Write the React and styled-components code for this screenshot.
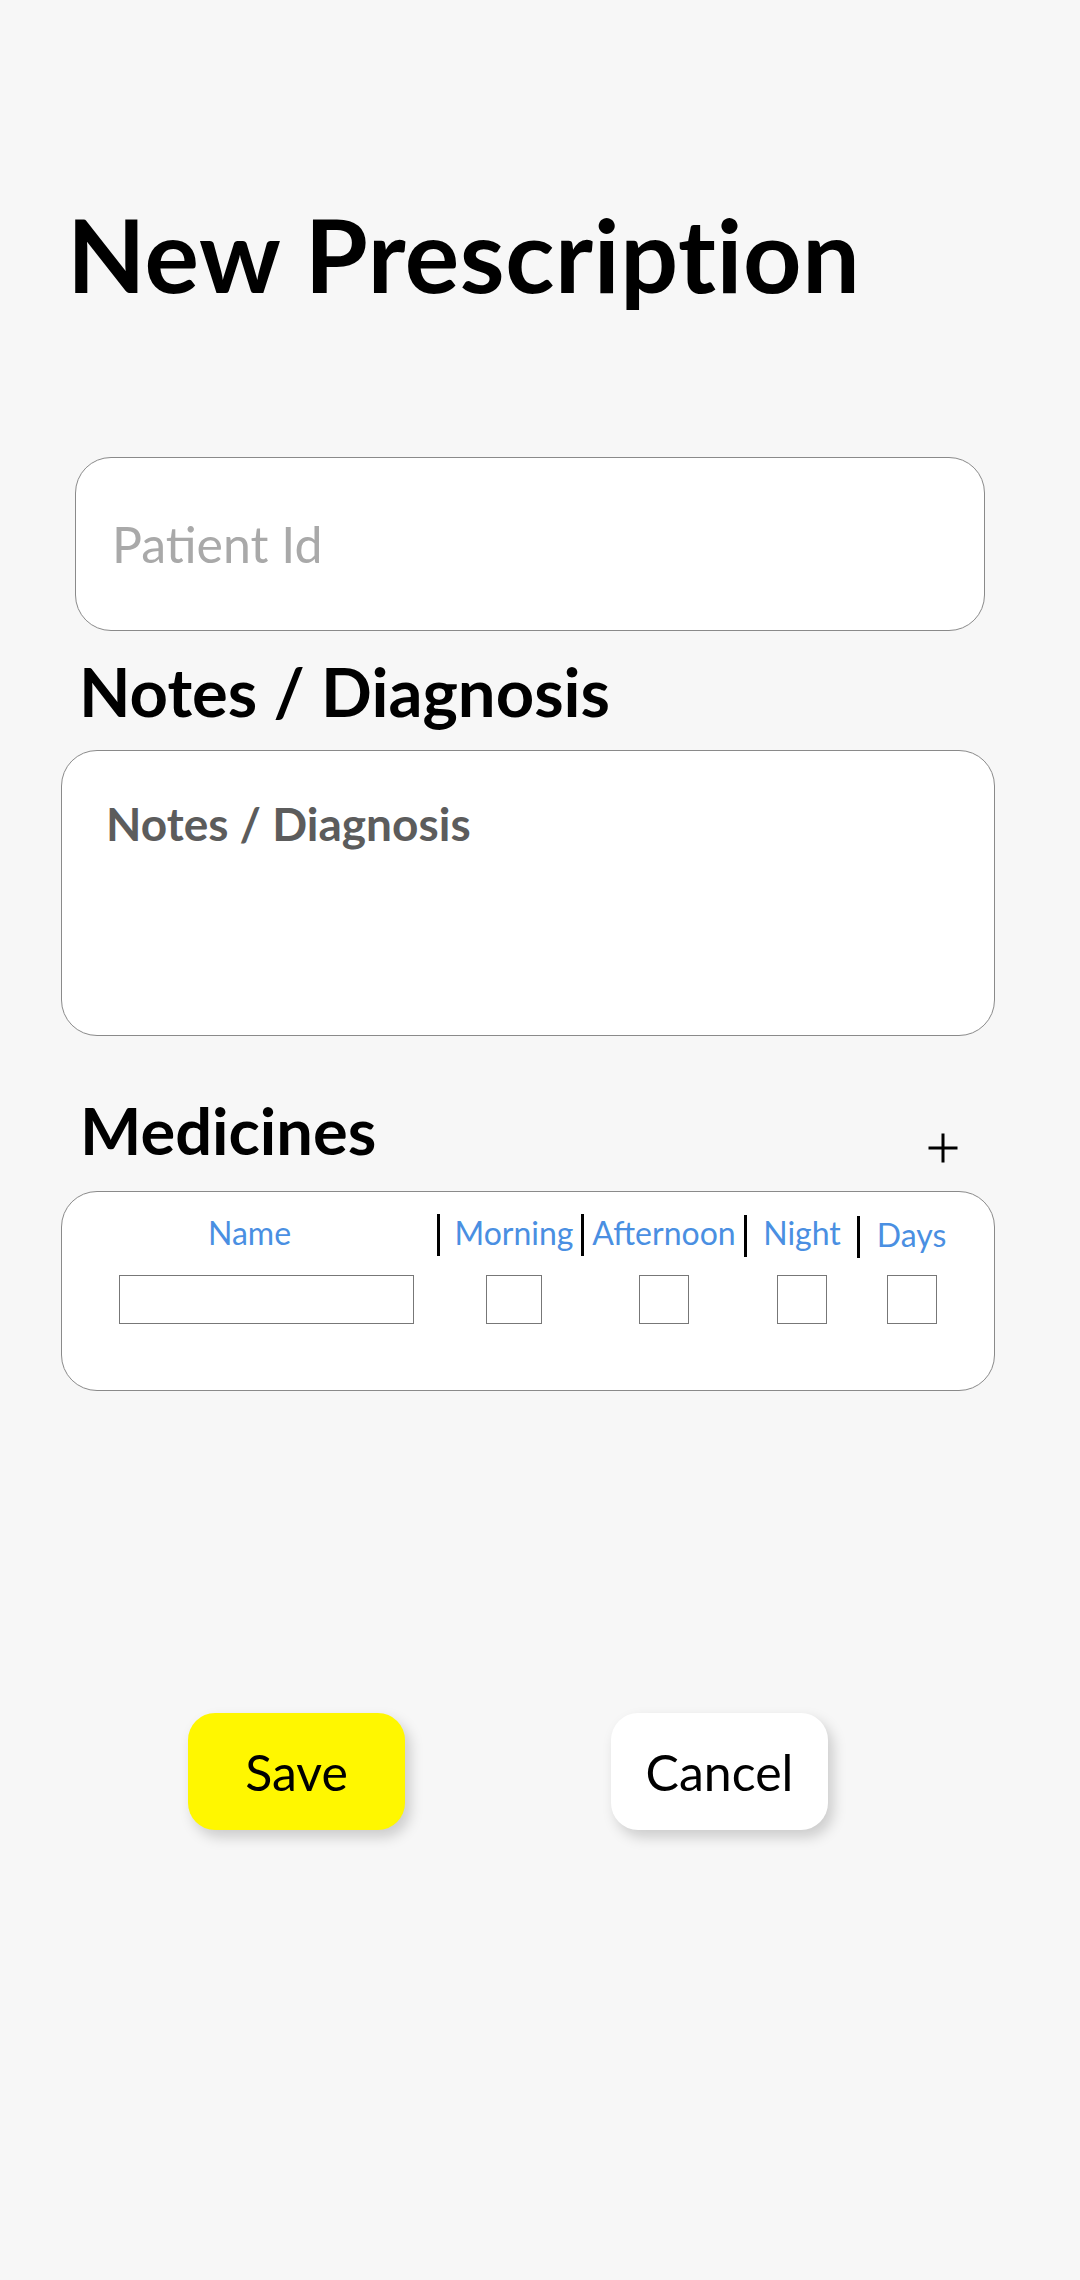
import React from "react";
import styled, { createGlobalStyle } from "styled-components";

const Global = createGlobalStyle`
  html, body { margin: 0; padding: 0; background: #f7f7f7; }
  body { font-family: Lato, "Noto Sans", sans-serif; }
  * { box-sizing: border-box; }
`;

const Page = styled.div`
  width: 1080px;
  min-height: 2280px;
  background: #f7f7f7;
  padding-top: 204px;
  display: flex;
  flex-direction: column;
`;

const Title = styled.h1`
  margin: 0;
  padding-left: 67px;
  font-family: Lato, "Noto Sans", sans-serif;
  font-weight: 700;
  font-size: 102px;
  line-height: 100px;
  letter-spacing: 0.6px;
  color: #000;
`;

const TextField = styled.input`
  margin: 153px 0 0 75px;
  width: 910px;
  height: 174px;
  border: 1px solid #8a8a8a;
  border-radius: 36px;
  background: #fff;
  padding: 0 0 0 36px;
  font-family: Lato, "Noto Sans", sans-serif;
  font-size: 50px;
  color: #222;
  outline: none;
  &::placeholder { color: #a9a9a9; }
`;

const SectionHeading = styled.h2`
  margin: ${(p) => p.$top}px 0 0 0;
  padding-left: ${(p) => p.$left}px;
  font-family: Lato, "Noto Sans", sans-serif;
  font-weight: 700;
  font-size: ${(p) => p.$size}px;
  line-height: 66px;
  color: #000;
`;

const NotesArea = styled.textarea`
  margin: 26px 0 0 61px;
  width: 934px;
  height: 286px;
  border: 1px solid #8a8a8a;
  border-radius: 36px;
  background: #fff;
  padding: 47px 40px 0 44px;
  font-family: Lato, "Noto Sans", sans-serif;
  font-weight: 700;
  font-size: 46px;
  line-height: 52px;
  resize: none;
  outline: none;
  color: #333;
  &::placeholder { color: #5c5c5c; }
`;

const MedicinesHeader = styled.div`
  margin-top: 61px;
  display: flex;
  justify-content: space-between;
  align-items: flex-start;
  padding-right: 121px;
  height: 66px;
`;

const AddButton = styled.button`
  align-self: flex-end;
  margin-bottom: -1px;
  width: 32px;
  height: 32px;
  padding: 0;
  border: none;
  background: transparent;
  display: flex;
  cursor: pointer;
`;

const MedicineBox = styled.div`
  margin: 28px 0 0 61px;
  width: 934px;
  height: 200px;
  border: 1px solid #8a8a8a;
  border-radius: 36px;
  background: #fff;
  padding: 22px 31px 0 0;
  display: grid;
  grid-template-columns: 375px 3px 141px 3px 160px 3px 110px 3px 103px;
  grid-template-rows: 42px 49px;
  row-gap: 19px;
`;

const ColLabel = styled.span`
  grid-row: 1;
  grid-column: ${(p) => p.$col};
  justify-self: center;
  margin-left: ${(p) => p.$nudge || 0}px;
  margin-top: ${(p) => p.$drop || 0}px;
  font-family: Lato, "Noto Sans", sans-serif;
  font-size: 32px;
  line-height: 38px;
  color: #4a8fe2;
  white-space: nowrap;
`;

const Divider = styled.span`
  grid-row: 1;
  grid-column: ${(p) => p.$col};
  width: 3px;
  height: 42px;
  background: #000;
  margin-top: ${(p) => p.$drop || 0}px;
`;

const CellInput = styled.input`
  grid-row: 2;
  grid-column: ${(p) => p.$col};
  justify-self: ${(p) => (p.$start ? "start" : "center")};
  margin-left: ${(p) => p.$nudge || 0}px;
  width: ${(p) => p.$w}px;
  height: 49px;
  border: 1px solid #777;
  border-radius: 0;
  background: #fff;
  padding: 0 4px;
  font-family: Lato, "Noto Sans", sans-serif;
  font-size: 28px;
  outline: none;
`;

const ButtonRow = styled.div`
  margin-top: 322px;
  display: flex;
  gap: 206px;
  padding-left: 188px;
`;

const ActionButton = styled.button`
  width: 217px;
  height: 117px;
  border: none;
  border-radius: 27px;
  background: ${(p) => (p.$primary ? "#fff700" : "#ffffff")};
  box-shadow: 5px 7px 14px rgba(0, 0, 0, 0.18);
  font-family: Lato, "Noto Sans", sans-serif;
  font-size: 50px;
  color: #000;
  padding: 0;
  cursor: pointer;
`;

export default function App() {
  return (
    <>
      <Global />
      <Page>
        <Title>New Prescription</Title>
        <TextField placeholder="Patient Id" />
        <SectionHeading $top={27} $left={79} $size={67}>Notes / Diagnosis</SectionHeading>
        <NotesArea placeholder="Notes / Diagnosis" />
        <MedicinesHeader>
          <SectionHeading $top={0} $left={80} $size={65}>Medicines</SectionHeading>
          <AddButton aria-label="Add medicine">
            <svg width="32" height="32" viewBox="0 0 32 32">
              <path d="M16 1.5V30.5M1.5 16H30.5" stroke="#000" strokeWidth="3" fill="none" />
            </svg>
          </AddButton>
        </MedicinesHeader>
        <MedicineBox>
          <ColLabel $col={1}>Name</ColLabel>
          <Divider $col={2} />
          <ColLabel $col={3} $nudge={7}>Morning</ColLabel>
          <Divider $col={4} />
          <ColLabel $col={5}>Afternoon</ColLabel>
          <Divider $col={6} $drop={1} />
          <ColLabel $col={7}>Night</ColLabel>
          <Divider $col={8} $drop={2} />
          <ColLabel $col={9} $drop={2}>Days</ColLabel>
          <CellInput $col={1} $start $nudge={57} $w={295} />
          <CellInput $col={3} $nudge={7} $w={56} />
          <CellInput $col={5} $w={50} />
          <CellInput $col={7} $w={50} />
          <CellInput $col={9} $w={50} />
        </MedicineBox>
        <ButtonRow>
          <ActionButton $primary>Save</ActionButton>
          <ActionButton>Cancel</ActionButton>
        </ButtonRow>
      </Page>
    </>
  );
}
